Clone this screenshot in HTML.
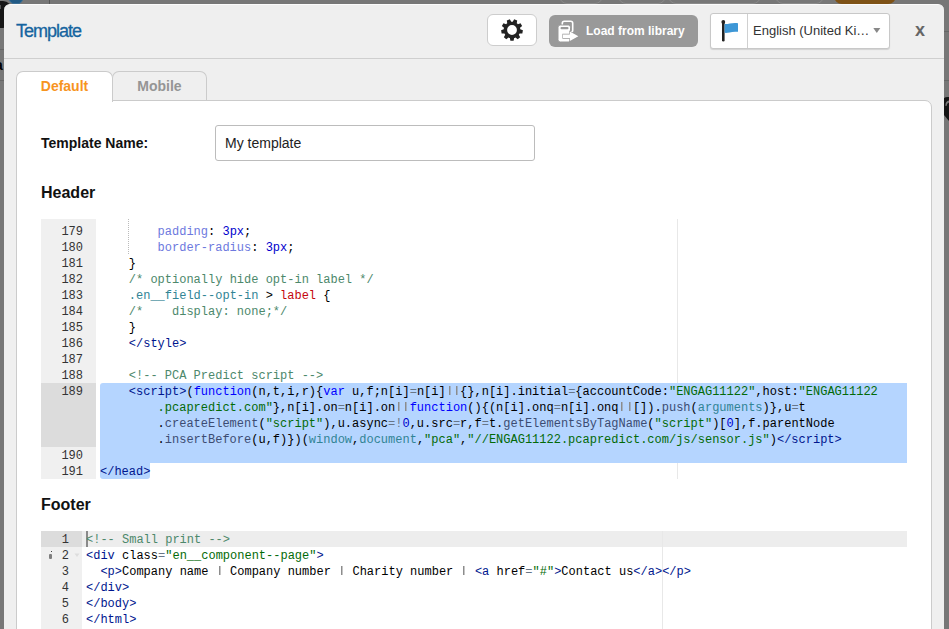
<!DOCTYPE html>
<html><head><meta charset="utf-8">
<style>
*{box-sizing:border-box}
html,body{margin:0;padding:0}
body{width:949px;height:629px;overflow:hidden;position:relative;background:#777;font-family:"Liberation Sans",sans-serif}
.abs{position:absolute}
.modal{position:absolute;left:4px;top:4px;width:940px;height:640px;background:#efefef;border-radius:6px 6px 0 0;border-top:1px solid #fbfbfb}
.hdrline{position:absolute;left:4px;top:58px;width:940px;height:1px;background:#cfcfcf}
.title{position:absolute;left:16px;top:20px;font-size:18px;letter-spacing:-1px;color:#15649f;line-height:22px;white-space:nowrap;-webkit-text-stroke:0.3px #15649f}
.btn-gear{position:absolute;left:487px;top:14px;width:50px;height:32px;background:#fff;border:1px solid #cdcdcd;border-radius:6px}
.btn-gear svg{position:absolute;left:12.5px;top:3.5px}
.btn-lib{position:absolute;left:549px;top:15px;width:149px;height:32px;background:#999;border-radius:6px}
.btn-lib span{position:absolute;left:37px;top:9px;font-size:12px;font-weight:bold;color:#fff;line-height:15px;white-space:nowrap}
.btn-lib svg{position:absolute;left:0;top:0}
.lang{position:absolute;left:710px;top:13px;width:180px;height:35.5px;background:#fff;border:1px solid #c8c8c8;border-radius:3px;box-shadow:0 1px 1px rgba(0,0,0,.12)}
.lang .sep{position:absolute;left:36px;top:0;width:1px;height:34px;background:#d0d0d0}
.lang span{position:absolute;left:42px;top:8.5px;font-size:13px;color:#333;line-height:16px;white-space:nowrap}
.lang svg{position:absolute;left:0;top:0}
.close{position:absolute;left:915px;top:19px;font-size:18px;font-weight:bold;color:#666;line-height:22px}
.tab{position:absolute;top:71px;height:30px;border:1px solid #cbcbcb;border-bottom:none;border-radius:7px 7px 0 0;font-size:14px;font-weight:bold;text-align:center;line-height:16px;padding-top:6px}
.tab1{left:16px;width:97px;background:#fff;color:#f7941e;z-index:2;height:31px}
.tab2{left:112px;width:95px;background:#efefef;color:#959595;height:29px}
.panel{position:absolute;left:16px;top:100px;width:916px;height:600px;background:#fff;border:1px solid #cbcbcb;border-radius:0 7px 0 0}
.lbl{position:absolute;font-weight:bold;color:#111;white-space:nowrap}
.inp{position:absolute;left:215px;top:125px;width:320px;height:36px;border:1px solid #bcbcbc;border-radius:3px;background:#fff}
.inp span{position:absolute;left:9px;top:9px;font-size:14px;color:#222;line-height:16px;white-space:nowrap}
.ed{position:absolute;left:41px;width:866px;overflow:hidden;background:#fff;font-family:"Liberation Mono",monospace;font-size:12px;line-height:16px;color:#000}
.gut{position:absolute;left:0;top:0;bottom:0;background:#f0f0f0}
.gc{position:absolute;left:0;height:16px;padding-top:1px;line-height:16px;text-align:right;color:#333;white-space:pre}
.ln{position:absolute;height:17px;padding-top:1px;white-space:pre}
.pm{position:absolute;top:0;bottom:0;width:1px;background:#e8e8e8}
.c{color:rgb(76,136,107)}
.t{color:rgb(0,22,142)}
.s{color:rgb(3,106,7)}
.v{color:rgb(49,132,149)}
.k{color:blue}
.o{color:rgb(104,118,135)}
.f{color:rgb(60,76,114)}
.ty{color:rgb(109,121,222)}
.n{color:rgb(0,0,205)}
.r{color:rgb(197,6,11)}
.g,.pp{color:transparent;background:linear-gradient(#8c8c8c,#8c8c8c) no-repeat 2.9px 0.6px/1.5px 9px}
.pp{background:linear-gradient(#8c8c8c,#8c8c8c) no-repeat 2.9px 0.6px/1.5px 9px,linear-gradient(#8c8c8c,#8c8c8c) no-repeat 10.1px 0.6px/1.5px 9px}
</style></head>
<body>
<div class="abs" style="left:-8px;top:1px;width:20px;height:27px;border-radius:9px;background:#161616"></div>
<div class="abs" style="left:0;top:5px;width:1px;height:4px;background:#555"></div>
<div class="abs" style="left:0;top:49px;width:4px;height:1px;background:#666"></div>
<div class="abs" style="left:0;top:80px;width:4px;height:1px;background:#666"></div>
<div class="abs" style="left:-5px;top:58px;font:bold 14px 'Liberation Sans',sans-serif;line-height:14px;color:#000">a</div>
<div class="abs" style="left:9px;top:-8px;width:14px;height:11.5px;border-radius:5px;border:1.5px solid #3a6e95;background:#215a85"></div>
<div class="abs" style="left:49px;top:0;width:1px;height:4px;background:#555"></div>
<div class="abs" style="left:559px;top:-12px;width:44px;height:15.5px;border-radius:8px;border:1px solid #8a8a8a"></div>
<div class="abs" style="left:618px;top:-12px;width:48px;height:15.5px;border-radius:8px;border:1px solid #8a8a8a"></div>
<div class="abs" style="left:668px;top:-12px;width:93px;height:15.5px;border-radius:8px;border:1px solid #8a8a8a"></div>
<div class="abs" style="left:775px;top:-12px;width:49px;height:15.5px;border-radius:8px;border:1px solid #8a8a8a"></div>
<div class="abs" style="left:834px;top:-12px;width:62px;height:15.5px;border-radius:9px;background:#7e5216"></div>
<div class="abs" style="left:944px;top:31px;width:5px;height:1px;background:#666"></div>
<div class="abs" style="left:944px;top:80px;width:5px;height:1px;background:#666"></div>
<svg class="abs" style="left:944px;top:95px" width="5" height="28"><path d="M0 3 Q2 1.5 5 2 V26 L0 20 Z" fill="#141414"/><path d="M1.5 11 Q1 6 5 5.5 V7.5 Q2.8 8 2.5 11 Z" fill="#777"/></svg>
<div class="modal"></div>
<div class="hdrline"></div>
<div class="title">Template</div>
<div class="btn-gear"><svg width="22" height="22" viewBox="-11 -11 22 22"><path fill="#222" fill-rule="evenodd" d="M2.15 8.02 L1.61 10.78 L-1.61 10.78 L-2.15 8.02 L-2.61 7.88 L-3.06 7.71 L-3.51 7.52 L-5.70 9.29 L-8.16 7.22 L-6.80 4.76 L-7.06 4.36 L-7.31 3.94 L-7.52 3.51 L-10.34 3.46 L-10.90 0.29 L-8.27 -0.72 L-8.21 -1.20 L-8.13 -1.68 L-8.02 -2.15 L-10.14 -3.99 L-8.53 -6.79 L-5.87 -5.87 L-5.52 -6.20 L-5.15 -6.51 L-4.76 -6.80 L-5.20 -9.58 L-2.17 -10.68 L-0.72 -8.27 L-0.24 -8.30 L0.24 -8.30 L0.72 -8.27 L2.17 -10.68 L5.20 -9.58 L4.76 -6.80 L5.15 -6.51 L5.52 -6.20 L5.87 -5.87 L8.53 -6.79 L10.14 -3.99 L8.02 -2.15 L8.13 -1.68 L8.21 -1.20 L8.27 -0.72 L10.90 0.29 L10.34 3.46 L7.52 3.51 L7.31 3.94 L7.06 4.36 L6.80 4.76 L8.16 7.22 L5.70 9.29 L3.51 7.52 L3.06 7.71 L2.61 7.88 Z M4.9 0 A4.9 4.9 0 1 0 -4.9 0 A4.9 4.9 0 1 0 4.9 0 Z"/></svg></div>
<div class="btn-lib"><svg width="36" height="32" viewBox="549 15 36 32">
<rect x="562.3" y="21.3" width="10.4" height="11" rx="2" fill="none" stroke="#fff" stroke-width="1.6"/>
<rect x="558" y="25" width="12.5" height="17" rx="2.2" fill="#fff" stroke="#999" stroke-width="1"/>
<rect x="560.5" y="27" width="8" height="2.2" rx="1" fill="#999"/>
<path d="M563 34.4 H569.8 V31.6 L578.3 36.3 L569.8 41 V38.1 H563 Z" fill="#fff" stroke="#999" stroke-width="1.2" stroke-linejoin="miter"/>
<path d="M563 34.4 H569.8 V31.6 L578.3 36.3 L569.8 41 V38.1 H563 Z" fill="#fff"/>
</svg><span>Load from library</span></div>
<div class="lang"><svg width="36" height="33" viewBox="711 14 36 33">
<rect x="722" y="21" width="2.6" height="20.5" rx="1.2" fill="#222"/>
<circle cx="723.3" cy="21.9" r="1.9" fill="#222"/>
<path d="M724.6 24 C728 24.6 731 22.4 738 23.2 V31.8 C731 31 728 33.4 724.6 32.8 Z" fill="#3d97d6"/>
</svg><div class="sep"></div><span>English (United Ki…</span>
<svg width="10" height="8" viewBox="0 0 10 8" style="left:161px;top:13px"><path d="M1.3 1 H8.3 L4.8 6 Z" fill="#888"/></svg></div>
<div class="close">x</div>
<div class="panel"></div>
<div class="tab tab2">Mobile</div>
<div class="tab tab1">Default</div>
<div class="lbl" style="left:41px;top:135px;font-size:14px;line-height:16px">Template Name:</div>
<div class="inp"><span>My template</span></div>
<div class="lbl" style="left:41px;top:183px;font-size:16px;line-height:20px">Header</div>
<div class="lbl" style="left:41px;top:495px;font-size:16px;line-height:20px">Footer</div>
<div class="ed" style="top:219px;height:260px"><div class="gut" style="width:55px"></div><div class="abs" style="left:0;top:164px;width:55px;height:64px;background:#dcdcdc"></div><div class="pm" style="left:636px"></div><div class="abs" style="left:59px;top:164px;width:807px;height:80px;background:#b5d5ff;border-radius:3px 0 0 0"></div><div class="abs" style="left:59px;top:244px;width:50.4px;height:16px;background:#b5d5ff;border-radius:0 0 3px 3px"></div><div class="abs" style="left:87px;top:0;width:1px;height:35px;background-image:linear-gradient(#bbb 50%,transparent 50%);background-size:1px 2px"></div><div class="gc" style="top:4px;width:42px">179</div><div class="ln" style="top:4px;left:59px">        <span class="ty">padding</span>: <span class="n">3px</span>;</div><div class="gc" style="top:20px;width:42px">180</div><div class="ln" style="top:20px;left:59px">        <span class="ty">border-radius</span>: <span class="n">3px</span>;</div><div class="gc" style="top:36px;width:42px">181</div><div class="ln" style="top:36px;left:59px">    }</div><div class="gc" style="top:52px;width:42px">182</div><div class="ln" style="top:52px;left:59px">    <span class="c">/* optionally hide opt-in label */</span></div><div class="gc" style="top:68px;width:42px">183</div><div class="ln" style="top:68px;left:59px">    <span class="v">.en__field--opt-in</span> &gt; <span class="r">label</span> {</div><div class="gc" style="top:84px;width:42px">184</div><div class="ln" style="top:84px;left:59px">    <span class="c">/*    display: none;*/</span></div><div class="gc" style="top:100px;width:42px">185</div><div class="ln" style="top:100px;left:59px">    }</div><div class="gc" style="top:116px;width:42px">186</div><div class="ln" style="top:116px;left:59px">    <span class="t">&lt;/style&gt;</span></div><div class="gc" style="top:132px;width:42px">187</div><div class="ln" style="top:132px;left:59px"></div><div class="gc" style="top:148px;width:42px">188</div><div class="ln" style="top:148px;left:59px">    <span class="c">&lt;!-- PCA Predict script --&gt;</span></div><div class="gc" style="top:164px;width:42px">189</div><div class="ln" style="top:164px;left:59px">    <span class="t">&lt;script&gt;</span>(<span class="k">function</span>(n,t,i,r){<span class="k">var</span> u,f;n[i]<span class="o">=</span>n[i]<span class="pp">||</span>{},n[i].initial<span class="o">=</span>{accountCode:<span class="s">"ENGAG11122"</span>,host:<span class="s">"ENGAG11122</span></div><div class="ln" style="top:180px;left:59px">        <span class="s">.pcapredict.com"</span>},n[i].on<span class="o">=</span>n[i].on<span class="pp">||</span><span class="k">function</span>(){(n[i].onq<span class="o">=</span>n[i].onq<span class="pp">||</span>[]).<span class="f">push</span>(<span class="v">arguments</span>)},u<span class="o">=</span>t</div><div class="ln" style="top:196px;left:59px">        .<span class="f">createElement</span>(<span class="s">"script"</span>),u.async<span class="o">=!</span><span class="n">0</span>,u.src<span class="o">=</span>r,f<span class="o">=</span>t.<span class="f">getElementsByTagName</span>(<span class="s">"script"</span>)[<span class="n">0</span>],f.parentNode</div><div class="ln" style="top:212px;left:59px">        .<span class="f">insertBefore</span>(u,f)})(<span class="v">window</span>,<span class="v">document</span>,<span class="s">"pca"</span>,<span class="s">"//ENGAG11122.pcapredict.com/js/sensor.js"</span>)<span class="t">&lt;/script&gt;</span></div><div class="gc" style="top:228px;width:42px">190</div><div class="ln" style="top:228px;left:59px"></div><div class="gc" style="top:244px;width:42px">191</div><div class="ln" style="top:244px;left:59px"><span class="t">&lt;/head&gt;</span></div></div>
<div class="ed" style="top:531px;height:120px"><div class="gut" style="width:41px"></div><div class="abs" style="left:0;top:0;width:41px;height:16px;background:#dcdcdc"></div><div class="abs" style="left:41px;top:0;width:825px;height:16px;background:#ededed"></div><div class="pm" style="left:621px"></div><div class="abs" style="left:9.5px;top:19.5px;width:1.6px;height:1.6px;background:#444"></div><div class="abs" style="left:7.5px;top:22.5px;width:3.6px;height:5.5px;border-radius:1px;background:#333;opacity:.6"></div><svg class="abs" style="left:33px;top:22px" width="6" height="5"><path d="M0.5 0.5 H5.5 L3 4 Z" fill="#ddd"/></svg><div class="abs" style="left:45px;top:0;width:2px;height:16px;background:#8a8a8a"></div><div class="gc" style="top:0px;width:28px">1</div><div class="ln" style="top:0px;left:45px"><span class="c">&lt;!-- Small print --&gt;</span></div><div class="gc" style="top:16px;width:28px">2</div><div class="ln" style="top:16px;left:45px"><span class="t">&lt;div</span> class<span class="o">=</span><span class="s">"en__component--page"</span><span class="t">&gt;</span></div><div class="gc" style="top:32px;width:28px">3</div><div class="ln" style="top:32px;left:45px">  <span class="t">&lt;p&gt;</span>Company name <span class="g">|</span> Company number <span class="g">|</span> Charity number <span class="g">|</span> <span class="t">&lt;a</span> href<span class="o">=</span><span class="s">"#"</span><span class="t">&gt;</span>Contact us<span class="t">&lt;/a&gt;&lt;/p&gt;</span></div><div class="gc" style="top:48px;width:28px">4</div><div class="ln" style="top:48px;left:45px"><span class="t">&lt;/div&gt;</span></div><div class="gc" style="top:64px;width:28px">5</div><div class="ln" style="top:64px;left:45px"><span class="t">&lt;/body&gt;</span></div><div class="gc" style="top:80px;width:28px">6</div><div class="ln" style="top:80px;left:45px"><span class="t">&lt;/html&gt;</span></div><div class="gc" style="top:96px;width:28px">7</div><div class="ln" style="top:96px;left:45px"></div></div>
</body></html>
